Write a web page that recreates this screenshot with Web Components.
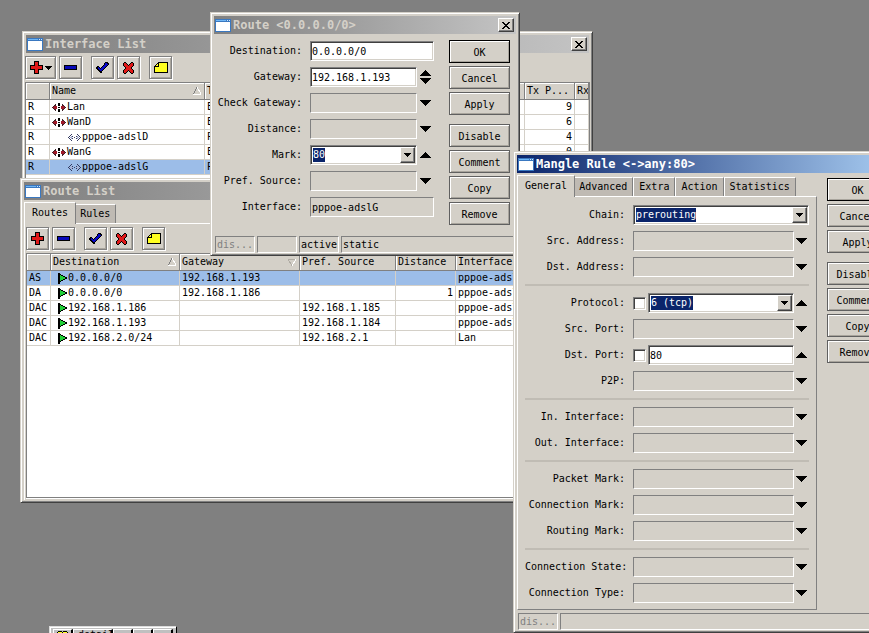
<!DOCTYPE html>
<html lang="en">
<head>
<meta charset="utf-8">
<title>Router</title>
<style>
  html, body {
    height: 100%;
    margin: 0;
  }
  body {
    --face: #d4d0c8;
    --shade: #808080;
    --dark: #404040;
    --navy: #0a246a;
    --select: #9cbde8;
    font: 10px/14px "DejaVu Sans Mono", "Liberation Mono", monospace;
    color: #000;
  }
</style>
</head>
<body>
<mdi-desktop>
  <mdi-window caption="Interface List" style="left: 22px; top: 31px; width: 571px; height: 200px">
    <tool-bar items="add-menu,remove,,enable,disable,,comment"></tool-bar>
    <data-grid id="interfaces"></data-grid>
  </mdi-window>

  <mdi-window caption="Route List" no-close style="left: 20px; top: 178px; width: 520px; height: 325px">
    <tab-panel tabs="Routes,Rules">
      <tool-bar items="add,remove,,enable,disable,,comment"></tool-bar>
      <data-grid id="routes"></data-grid>
    </tab-panel>
  </mdi-window>

  <mdi-window caption="Route &lt;0.0.0.0/0&gt;" style="left: 210px; top: 12px; width: 310px; height: 244px">
    <dialog-body class="route">
      <field-row label="Destination" value="0.0.0.0/0"></field-row>
      <field-row label="Gateway" value="192.168.1.193" arrow="both"></field-row>
      <field-row label="Check Gateway" kind="off" arrow="down"></field-row>
      <field-row label="Distance" kind="off" arrow="down"></field-row>
      <field-row label="Mark" value="80" kind="combo" arrow="up"></field-row>
      <field-row label="Pref. Source" kind="off" arrow="down"></field-row>
      <field-row label="Interface" value="pppoe-adslG" kind="static"></field-row>
      <command-list slot="commands"></command-list>
    </dialog-body>
    <status-bar slot="status" cells="~dis...,,active,static"></status-bar>
  </mdi-window>

  <mdi-window caption="Mangle Rule &lt;-&gt;any:80&gt;" active no-close style="left: 513px; top: 151px; width: 382px; height: 482px">
    <dialog-body class="mangle">
      <tab-panel tabs="General,Advanced,Extra,Action,Statistics" boxed>
        <field-list>
          <field-row label="Chain" value="prerouting" kind="combo"></field-row>
          <field-row label="Src. Address" kind="off" arrow="down"></field-row>
          <field-row label="Dst. Address" kind="off" arrow="down"></field-row>
          <hr>
          <field-row label="Protocol" value="6 (tcp)" kind="combo" invert arrow="up"></field-row>
          <field-row label="Src. Port" kind="off" arrow="down"></field-row>
          <field-row label="Dst. Port" value="80" invert arrow="up"></field-row>
          <field-row label="P2P" kind="off" arrow="down"></field-row>
          <hr>
          <field-row label="In. Interface" kind="off" arrow="down"></field-row>
          <field-row label="Out. Interface" kind="off" arrow="down"></field-row>
          <hr>
          <field-row label="Packet Mark" kind="off" arrow="down"></field-row>
          <field-row label="Connection Mark" kind="off" arrow="down"></field-row>
          <field-row label="Routing Mark" kind="off" arrow="down"></field-row>
          <hr>
          <field-row label="Connection State" kind="off" arrow="down"></field-row>
          <field-row label="Connection Type" kind="off" arrow="down"></field-row>
        </field-list>
      </tab-panel>
      <command-list slot="commands"></command-list>
    </dialog-body>
    <status-bar slot="status" cells="~dis...,"></status-bar>
  </mdi-window>

  <mini-window style="left: 49px; top: 626px">detail)</mini-window>
</mdi-desktop>

<script>
const px = (w, h, body) =>
  `<svg width="${w}" height="${h}" viewBox="0 0 ${w} ${h}" shape-rendering="crispEdges" aria-hidden="true">${body}</svg>`

const glyphs = {
  add: px(13, 13, '<path d="M4 0h5v4h4v5H9v4H4V9H0V4h4z"/><path fill="#e01818" d="M5 1h3v4h4v3H8v4H5V8H1V5h4z"/>'),
  remove: px(13, 5, '<path d="M0 0h13v5H0z"/><path fill="#0808b8" d="M1 1h11v3H1z"/>'),
  enable: px(13, 11, '<path d="M9 0h3v1h1v2h-1v1h-1v1h-1v1H9v1H8v1H7v1H6v2H4v-1H3V9H2V8H1V7H0V5h1V4h2v1h1v1h1V5h1V4h1V3h1V1h1z"/><path fill="#0808c8" d="M9 1h2v1h1v1h-1v1h-1v1H9v1H8v1H7v1H6v1H4V8H3V7H2V5h1v1h1v1h1V6h1V5h1V4h1V3h1z"/>'),
  disable: px(11, 12, '<path d="M1 0h2v1h1v1h1v1h1V2h1V1h1V0h2v1h1v3h-1v1H9v2h1v1h1v3h-1v1H8v-1H7v-1H6V9H5v1H4v1H3v1H1v-1H0V8h1V7h1V5H1V4H0V1h1z"/><path fill="#e01818" d="M1 1h2v1h1v1h1v1h1V3h1V2h1V1h2v3H9v1H8v2h1v1h1v3H8v-1H7V9H6V8H5v1H4v1H3v1H1V8h1V7h1V5H2V4H1z"/>'),
  comment: px(14, 11, '<path d="M4 0h10v11H0V4h1V3h1V2h1V1h1z"/><path fill="#ffff20" d="M5 1h8v9H1V5h4zM3 2h1v2H2V3h1z"/>'),
  down: px(11, 6, '<path d="M0 0h11v1h-1v1H9v1H8v1H7v1H6v1H5V5H4V4H3V3H2V2H1V1H0z"/>'),
  up: px(11, 6, '<path d="M0 6h11V5h-1V4H9V3H8V2H7V1H6V0H5v1H4v1H3v1H2v1H1v1H0z"/>'),
  both: px(11, 14, '<path d="M0 6h11V5h-1V4H9V3H8V2H7V1H6V0H5v1H4v1H3v1H2v1H1v1H0zM0 8h11v1h-1v1H9v1H8v1H7v1H6v1H5v-1H4v-1H3v-1H2v-1H1V9H0z"/>'),
  small: px(7, 4, '<path d="M0 0h7v1H6v1H5v1H4v1H3V3H2V2H1V1H0z"/>'),
  close: px(8, 7, '<path d="M0 0h2v1h1v1h2V1h1V0h2v1H7v1H6v1H5v1h1v1h1v1h1v1H6V6H5V5H3v1H2v1H0V6h1V5h1V4h1V3H2V2H1V1H0z"/>'),
  window: px(16, 13, '<path fill="#3a78c0" d="M0 0h16v13H0z"/><path fill="#70b8f8" d="M1 1h10v1H1z"/><path fill="#fff" d="M1 3h14v9H1z"/><path fill="#d0e8ff" d="M12 1h1v1h-1zM14 1h1v1h-1z"/>'),
  ether: px(14, 9, '<path d="M6 0h2v3H6zM6 6h2v3H6z"/><path fill="#402028" d="M3 1h1v7H3V7H2V6H1V5H0V4h1V3h1V2h1zM10 1h1v1h1v1h1v1h1v1h-1v1h-1v1h-1v1h-1z"/><path fill="#a01828" d="M2 3h3v3H2V5H1V4h1zM9 3h3v1h1v1h-1v1H9z"/><path d="M6 4h2v1H6z"/>'),
  pppoe: px(13, 7, '<path fill="#333a60" d="M3 0h1v1H3v1H2v1H1v1h1v1h1v1h1v1H3V6H2V5H1V4H0V3h1V2h1V1h1zM4 2h1v1H4zM4 4h1v1H4zM6 3h1v1H6zM9 0h1v1h1v1h1v1h1v1h-1v1h-1v1h-1v1H9V6h1V5h1V4h1V3h-1V2h-1V1H9zM8 2h1v1H8zM8 4h1v1H8z"/><path fill="#a8b0d0" d="M3 2h1v3H3zM2 3h1v1H2zM9 2h1v3H9zM10 3h1v1h-1z"/>'),
  flag: px(9, 11, '<path d="M0 0h2v1h1v1h2v1h2v1h2v2H7v1H5v1H3v1H2v2H0z"/><path fill="#20d038" d="M2 2h1v1h2v1h2v2H5v1H3v1H2z"/>'),
  asc: px(8, 8, '<path d="M4 0 0 8" stroke="#808080" fill="none"/><path d="M4 0 8 7H0" stroke="#fff" fill="none"/>'),
  desc: px(8, 8, '<path d="M8 1H0l4 7" stroke="#b0aca4" fill="none"/><path d="M8 1 4 8" stroke="#fff"/>')
}

class BaseElement extends HTMLElement {
  connectedCallback() {
    if (this.shadowRoot) return
    this.attachShadow({ mode: 'open' })
    this.render()
  }
  attr(name) {
    return this.getAttribute(name) || ''
  }
  escape(text) {
    return text.replace(/&/g, '&amp;').replace(/</g, '&lt;')
  }
}

customElements.define('mdi-desktop', class extends BaseElement {
  render() {
    this.shadowRoot.innerHTML = `
      <style>
        :host {
          display: block;
          position: relative;
          height: 100%;
          overflow: hidden;
          background: #808080;
        }
      </style>
      <slot></slot>
    `
  }
})

customElements.define('mdi-window', class extends BaseElement {
  render() {
    this.shadowRoot.innerHTML = `
      <style>
        :host {
          position: absolute;
          box-sizing: border-box;
          display: flex;
          flex-direction: column;
          padding: 2px;
          background: var(--face);
          border: 1px solid;
          border-color: var(--face) var(--dark) var(--dark) var(--face);
          box-shadow: inset 1px 1px #fff, inset -1px -1px var(--shade);
        }
        header {
          display: flex;
          align-items: center;
          height: 18px;
          margin: 1px;
          padding: 0 2px 0 1px;
          gap: 2px;
          color: var(--face);
          background: linear-gradient(90deg, #808080, #c4c4c4);
        }
        :host([active]) header {
          color: #fff;
          background: linear-gradient(90deg, var(--navy), #a6caf0);
        }
        h2 {
          flex: 1;
          margin: 0;
          font-size: 12px;
          line-height: 18px;
          white-space: nowrap;
        }
        .close {
          display: grid;
          place-items: center;
          width: 16px;
          height: 14px;
          padding: 0;
          background: var(--face);
          border: 1px solid;
          border-color: #fff var(--dark) var(--dark) #fff;
          box-shadow: inset -1px -1px var(--shade);
        }
        main {
          flex: 1;
          min-height: 0;
          display: flex;
          flex-direction: column;
        }
      </style>
      <header>
        ${glyphs.window}
        <h2>${this.escape(this.attr('caption'))}</h2>
        ${this.hasAttribute('no-close') ? '' : `<button class="close" aria-label="Close">${glyphs.close}</button>`}
      </header>
      <main><slot></slot></main>
      <slot name="status"></slot>
    `
    const close = this.shadowRoot.querySelector('.close')
    if (close) close.onclick = () => this.remove()
  }
})

customElements.define('tool-bar', class extends BaseElement {
  render() {
    const buttons = this.attr('items').split(',').map(name => {
      if (!name) return '<i></i>'
      const menu = name === 'add-menu'
      const icon = menu ? 'add' : name
      return `<button class="${name}" aria-label="${icon}">${glyphs[icon]}${menu ? glyphs.small : ''}</button>`
    }).join('')

    this.shadowRoot.innerHTML = `
      <style>
        :host {
          display: flex;
          gap: 3px;
          padding: 2px 0 3px;
        }
        i {
          width: 3px;
        }
        button {
          display: flex;
          align-items: center;
          justify-content: center;
          gap: 2px;
          width: 23px;
          height: 23px;
          padding: 0;
          background: var(--face);
          border: 1px solid var(--shade);
          box-shadow: inset 1px 1px #fff, inset -1px -1px #a8a49c, 1px 1px #fff;
        }
        .add-menu {
          width: 31px;
        }
      </style>
      ${buttons}
    `
  }
})

customElements.define('tab-panel', class extends BaseElement {
  render() {
    const tabs = this.attr('tabs').split(',').map((name, i) =>
      `<button role="tab" aria-selected="${i === 0}">${name}</button>`
    ).join('')

    this.shadowRoot.innerHTML = `
      <style>
        :host {
          flex: 1;
          min-height: 0;
          display: flex;
          flex-direction: column;
          padding: 1px 0 0 1px;
        }
        nav {
          display: flex;
          align-items: flex-end;
        }
        button {
          height: 19px;
          padding: 0 5px;
          font: inherit;
          color: inherit;
          background: #bfbab3;
          border: 1px solid;
          border-color: #fff var(--shade) transparent #fff;
          border-bottom: 0;
        }
        button[aria-selected="true"] {
          position: relative;
          height: 22px;
          margin: 0 -2px -1px 0;
          padding: 0 7px 2px;
          background: var(--face);
        }
        section {
          flex: 1;
          min-height: 0;
          display: flex;
          flex-direction: column;
          border: solid #fff;
          border-width: 1px 0 0 1px;
          padding: 1px 0 0 1px;
        }
        :host([boxed]) section {
          padding: 8px 7px 7px;
          border-width: 1px;
          border-color: #fff var(--shade) var(--shade) #fff;
        }
      </style>
      <nav role="tablist">${tabs}</nav>
      <section><slot></slot></section>
    `
    const all = this.shadowRoot.querySelectorAll('button')
    all.forEach(tab => {
      tab.onclick = () => all.forEach(t => t.setAttribute('aria-selected', t === tab))
    })
  }
})

customElements.define('data-grid', class extends BaseElement {
  set data(value) {
    this._data = value
    if (this.shadowRoot) this.render()
  }

  render() {
    const { columns, rows } = this._data || { columns: [], rows: [] }
    const cell = (value, i) => {
      const v = typeof value === 'object' ? value : { text: value }
      return `<td class="${columns[i].right ? 'right' : ''} ${v.icon || ''}">${v.icon ? glyphs[v.icon] : ''}${v.text}</td>`
    }
    this.shadowRoot.innerHTML = `
      <style>
        :host {
          display: block;
          flex: 1;
          min-height: 0;
          overflow: hidden;
          margin-bottom: 2px;
          background: #fff;
          border: 1px solid var(--shade);
          box-shadow: 0 1px #fff;
        }
        table {
          width: 100%;
          table-layout: fixed;
          border-collapse: separate;
          border-spacing: 0;
        }
        th, td {
          box-sizing: border-box;
          height: 15px;
          padding: 0 2px;
          line-height: 14px;
          text-align: left;
          font-weight: normal;
          white-space: nowrap;
          overflow: hidden;
          border: solid var(--face);
          border-width: 0 1px 1px 0;
        }
        th {
          height: 17px;
          background: var(--face);
          border-color: var(--shade);
          box-shadow: inset 1px 1px #fff;
        }
        th svg {
          float: right;
          margin: 3px 1px 0 0;
        }
        td svg {
          vertical-align: middle;
          margin-right: 1px;
        }
        .flag {
          padding-left: 7px;
        }
        .pppoe {
          padding-left: 18px;
        }
        .right {
          text-align: right;
        }
        .selected td {
          background: var(--select);
        }
      </style>
      <table>
        <colgroup>${columns.map(c => `<col${c.width ? ` style="width: ${c.width}px"` : ''}>`).join('')}</colgroup>
        <thead>
          <tr>${columns.map(c => `<th>${c.sort ? glyphs[c.sort] : ''}${c.name}</th>`).join('')}</tr>
        </thead>
        <tbody>
          ${rows.map(r => `<tr class="${r.selected ? 'selected' : ''}">${r.cells.map(cell).join('')}</tr>`).join('')}
        </tbody>
      </table>
    `
  }
})

customElements.define('field-list', class extends BaseElement {
  render() {
    this.shadowRoot.innerHTML = `
      <style>
        :host {
          display: flex;
          flex-direction: column;
          gap: 6px;
        }
        ::slotted(hr) {
          box-sizing: border-box;
          width: 100%;
          height: 2px;
          margin: 1px 0;
          border: solid;
          border-width: 1px 0;
          border-color: #c0bcb4 #fff;
        }
      </style>
      <slot></slot>
    `
  }
})

customElements.define('field-row', class extends BaseElement {
  render() {
    const kind = this.attr('kind') || 'text'
    const arrow = this.attr('arrow')
    const value = this.escape(this.attr('value'))
    const label = this.attr('label')

    const control = kind === 'combo'
      ? `<div class="box combo">
          <select id="control"><option>${value}</option></select>
          <button class="drop" aria-label="Open list">${glyphs.small}</button>
        </div>`
      : `<input id="control" class="box ${kind}" value="${value}" ${kind === 'text' ? '' : 'readonly'}>`

    this.shadowRoot.innerHTML = `
      <style>
        :host {
          display: flex;
          align-items: center;
          height: 20px;
        }
        label {
          flex: none;
          width: var(--label-width);
          margin-right: 8px;
          text-align: right;
          white-space: nowrap;
        }
        .box {
          flex: 1;
          min-width: 0;
          box-sizing: border-box;
          height: 20px;
          padding: 0 1px;
          font: inherit;
          color: inherit;
          background: #fff;
          border: 1px solid;
          border-color: var(--shade) #fff #fff var(--shade);
          border-radius: 0;
          outline: 0;
          box-shadow: inset 1px 1px var(--dark), inset -1px -1px var(--face);
        }
        .off, .static {
          background: transparent;
          box-shadow: none;
        }
        .combo {
          display: flex;
          align-items: center;
          justify-content: space-between;
          padding: 1px 1px 1px 2px;
        }
        select {
          appearance: none;
          field-sizing: content;
          height: 14px;
          padding: 0;
          font: inherit;
          line-height: 14px;
          color: #fff;
          background: var(--navy);
          border: 0;
          border-radius: 0;
          outline: 0;
        }
        button {
          display: grid;
          place-items: center;
          padding: 0;
          border: 0;
          background: none;
        }
        .drop {
          width: 15px;
          height: 16px;
          background: var(--face);
          border: 1px solid;
          border-color: #fff var(--dark) var(--dark) #fff;
          box-shadow: inset -1px -1px var(--shade);
        }
        .arrow {
          flex: none;
          width: var(--arrow-width);
          height: 18px;
        }
        .invert {
          appearance: none;
          box-sizing: border-box;
          width: 13px;
          height: 13px;
          margin: 0 2px 0 0;
          background: #fff;
          border: 1px solid;
          border-color: var(--shade) #fff #fff var(--shade);
          box-shadow: inset 1px 1px var(--dark), inset -1px -1px var(--face);
        }
        .invert:checked {
          background: var(--navy);
        }
      </style>
      <label for="control">${label}:</label>
      ${this.hasAttribute('invert') ? `<input class="invert" type="checkbox" aria-label="Not ${label}">` : ''}
      ${control}
      ${arrow ? `<button class="arrow" aria-label="Toggle ${label}">${glyphs[arrow]}</button>` : ''}
    `
    const drop = this.shadowRoot.querySelector('.drop')
    if (drop) drop.onclick = () => this.shadowRoot.querySelector('select').showPicker()
  }
})

customElements.define('dialog-body', class extends BaseElement {
  render() {
    this.shadowRoot.innerHTML = `
      <style>
        :host {
          flex: 1;
          min-height: 0;
          display: flex;
        }
        .fields {
          flex: 1;
          min-width: 0;
          display: flex;
          flex-direction: column;
        }
        :host(.route) {
          --label-width: 88px;
          --arrow-width: 17px;
          padding: 5px 7px 0 1px;
          gap: 15px;
        }
        :host(.route) .fields {
          gap: 6px;
          padding-top: 1px;
        }
        :host(.mangle) {
          --label-width: 100px;
          --arrow-width: 15px;
          gap: 10px;
          padding-right: 4px;
        }
        :host(.mangle) slot[name="commands"]::slotted(*) {
          padding-top: 4px;
        }
      </style>
      <div class="fields"><slot></slot></div>
      <slot name="commands"></slot>
    `
  }
})

customElements.define('command-list', class extends BaseElement {
  render() {
    this.shadowRoot.innerHTML = `
      <style>
        :host {
          flex: none;
          display: flex;
          flex-direction: column;
          gap: 3px;
          width: 61px;
        }
        button {
          height: 23px;
          padding: 2px 0 0;
          font: inherit;
          color: inherit;
          background: var(--face);
          border: 1px solid #606060;
          box-shadow: inset 1px 1px #fff, inset -1px -1px #a8a49c;
        }
        .default {
          border-color: #000;
        }
        .group {
          margin-top: 6px;
        }
      </style>
      <button class="default">OK</button>
      <button>Cancel</button>
      <button>Apply</button>
      <button class="group">Disable</button>
      <button>Comment</button>
      <button>Copy</button>
      <button>Remove</button>
    `
  }
})

customElements.define('status-bar', class extends BaseElement {
  render() {
    // a leading ~ marks a greyed-out state
    const cells = this.attr('cells').split(',').map(c =>
      `<span class="${c[0] === '~' ? 'dim' : ''}">${c.replace('~', '')}</span>`
    ).join('')

    this.shadowRoot.innerHTML = `
      <style>
        :host {
          display: flex;
          gap: 2px;
          padding: 3px 1px 0 2px;
        }
        span {
          box-sizing: border-box;
          width: 40px;
          height: 17px;
          padding: 1px 0 0 1px;
          white-space: nowrap;
          border: 1px solid;
          border-color: var(--shade) #fff #fff var(--shade);
        }
        span:last-child {
          flex: 1;
        }
        .dim {
          color: var(--shade);
        }
      </style>
      ${cells}
    `
  }
})

customElements.define('mini-window', class extends BaseElement {
  render() {
    this.shadowRoot.innerHTML = `
      <style>
        :host {
          position: absolute;
          display: flex;
          padding: 2px 3px;
          background: #c0c0c0;
          border: 1px solid;
          border-color: #dcdcdc #000 #000 #dcdcdc;
          box-shadow: inset 1px 1px #fff;
        }
        span, button {
          box-sizing: border-box;
          width: 20px;
          height: 18px;
          padding: 0 2px;
          line-height: 10px;
          background: #c0c0c0;
          border: solid;
          border-width: 1px 2px 1px 1px;
          border-color: #fff #000 #000 #fff;
          overflow: hidden;
        }
        svg {
          display: block;
        }
        .text {
          width: 40px;
          padding: 0 4px;
          white-space: nowrap;
        }
      </style>
      <span>${px(14, 10, '<path d="M2 1h4v1h1V1h4v1h1v7H1V2h1z"/><path fill="#ffff20" d="M2 2h4v6H2zM7 2h4v6H7z"/>')}</span>
      <span class="text"><slot></slot></span>
      <button aria-label="Restore"></button>
      <button aria-label="Maximize"></button>
      <button aria-label="Close"></button>
    `
  }
})

const row = (cells, selected = false) => ({ cells, selected })
const ether = text => ({ icon: 'ether', text })
const pppoe = text => ({ icon: 'pppoe', text })
const flag = text => ({ icon: 'flag', text })

document.getElementById('interfaces').data = {
  columns: [
    { name: '', width: 24 },
    { name: 'Name', width: 155, sort: 'asc' },
    { name: 'Type' },
    { name: 'Tx P...', width: 50, right: true },
    { name: 'Rx', width: 14 }
  ],
  rows: [
    row(['R', ether('Lan'), 'Ethernet', '9', '']),
    row(['R', ether('WanD'), 'Ethernet', '6', '']),
    row(['R', pppoe('pppoe-adslD'), 'PPPoE Client', '4', '']),
    row(['R', ether('WanG'), 'Ethernet', '0', '']),
    row(['R', pppoe('pppoe-adslG'), 'PPPoE Client', '0', ''], true)
  ]
}

document.getElementById('routes').data = {
  columns: [
    { name: '', width: 24 },
    { name: 'Destination', width: 129, sort: 'asc' },
    { name: 'Gateway', width: 120, sort: 'desc' },
    { name: 'Pref. Source', width: 96 },
    { name: 'Distance', width: 60, right: true },
    { name: 'Interface' }
  ],
  rows: [
    row(['AS', flag('0.0.0.0/0'), '192.168.1.193', '', '', 'pppoe-adslG'], true),
    row(['DA', flag('0.0.0.0/0'), '192.168.1.186', '', '1', 'pppoe-adslD']),
    row(['DAC', flag('192.168.1.186'), '', '192.168.1.185', '', 'pppoe-adslD']),
    row(['DAC', flag('192.168.1.193'), '', '192.168.1.184', '', 'pppoe-adslG']),
    row(['DAC', flag('192.168.2.0/24'), '', '192.168.2.1', '', 'Lan'])
  ]
}
</script>
</body>
</html>
